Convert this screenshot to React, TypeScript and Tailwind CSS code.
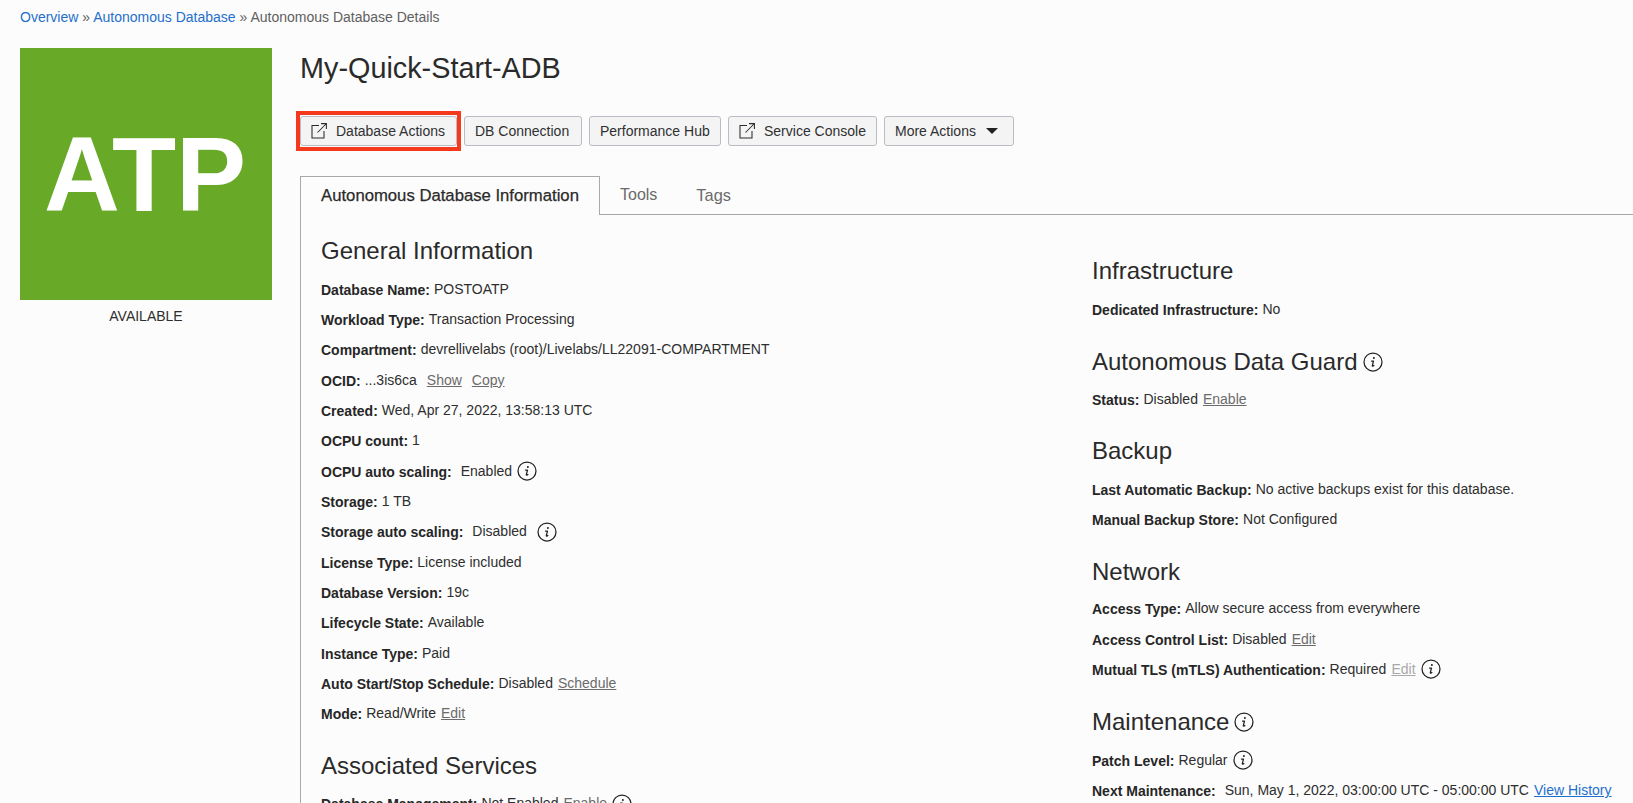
import React from 'react';

function InfoIcon({ className = '' }: { className?: string }) {
  return (
    <svg viewBox="0 0 20 20" className={`inline-block w-[20px] h-[20px] text-[#222] ${className}`} fill="none" stroke="currentColor">
      <circle cx="10" cy="10" r="9" strokeWidth="1.25" />
      <circle cx="10.9" cy="6" r="1" fill="currentColor" stroke="none" />
      <path d="M8.5 9h2l-1.2 4.6c-.1.5.2.7.6.5l1-.6" strokeWidth="1.25" strokeLinecap="round" strokeLinejoin="round" />
    </svg>
  );
}

function ExternalIcon() {
  return (
    <svg viewBox="0 0 16 16" className="w-[16px] h-[16px] shrink-0 text-[#2a2a2a]" fill="none" stroke="currentColor" strokeWidth="1.05">
      <path d="M8 2.5H1v12.5h12V8" />
      <path d="M6.5 9.5 15 1M10 .6h5.4V6" />
    </svg>
  );
}

function ActionButton({ label, external, caret, highlight, className = '' }: { label: string; external?: boolean; caret?: boolean; highlight?: boolean; className?: string }) {
  return (
    <button
      type="button"
      className={`relative h-[30px] flex items-center bg-[#f4f4f5] border border-[#b9bcc2] rounded-[3px] text-[14px] text-[#303030] whitespace-nowrap ${className}`}
    >
      {external && <span className="mr-[9px]"><ExternalIcon /></span>}
      {label}
      {caret && <span className="ml-[10px] w-0 h-0 border-x-[6px] border-x-transparent border-t-[6px] border-t-[#222]" />}
      {highlight && <span className="absolute -inset-x-[5px] -inset-y-[6px] border-[4px] border-[#f5391c]" />}
    </button>
  );
}

function Heading({ children, top = true, className = 'mb-[7.5px]' }: { children: React.ReactNode; top?: boolean; className?: string }) {
  return (
    <h2 className={`h-[30px] flex items-center gap-[5px] text-[24px] leading-[30px] text-[#2a2a2a] ${top ? 'mt-[22px]' : ''} ${className}`}>
      {children}
    </h2>
  );
}

function Row({ label, children }: { label: string; children?: React.ReactNode }) {
  return (
    <div className="h-[30.35px] flex items-center text-[14px] text-[#2e2e2e] whitespace-nowrap">
      <span className="font-bold text-[#262626] mr-[4px] translate-y-px">{label}</span>
      {children}
    </div>
  );
}

function TextLink({ children, muted }: { children: React.ReactNode; muted?: boolean }) {
  return <a className={`underline ${muted ? 'text-[#a9a9a9]' : 'text-[#6b6b6b]'}`}>{children}</a>;
}

export default function App() {
  return (
    <div className="h-screen overflow-hidden bg-[#fcfcfc] font-['Liberation_Sans',Arial,sans-serif]">
      <div className="h-[48px] pl-[20px] pt-[9px] text-[14px] leading-[16px] text-[#5f5f5f]">
        <a className="text-[#1f6fcc]">Overview</a> » <a className="text-[#1f6fcc]">Autonomous Database</a> » Autonomous Database Details
      </div>

      <div className="flex">
        {/* Status tile */}
        <div className="w-[252px] ml-[20px] shrink-0">
          <div className="h-[252px] pr-[2px] bg-[#68a927] flex items-center justify-center text-white font-bold text-[105px] leading-none">ATP</div>
          <div className="mt-[8px] text-center text-[14px] leading-[16px] text-[#2e2e2e]">AVAILABLE</div>
        </div>

        <div className="ml-[28px] flex-1 min-w-0">
          <h1 className="h-[40px] text-[28.8px] leading-[40px] text-[#2a2a2a]">My-Quick-Start-ADB</h1>

          <div className="mt-[28px] flex gap-[7px]">
            <ActionButton label="Database Actions" external highlight className="w-[157px] pl-[10px]" />
            <ActionButton label="DB Connection" className="w-[118px] pl-[10px]" />
            <ActionButton label="Performance Hub" className="w-[132px] pl-[10px]" />
            <ActionButton label="Service Console" external className="w-[149px] pl-[10px]" />
            <ActionButton label="More Actions" caret className="w-[130px] pl-[10px]" />
          </div>

          {/* Tabs */}
          <div className="mt-[30px] flex h-[39px] border-b border-[#a8a8a8]">
            <div className="w-[300px] h-[39px] border border-b-0 border-[#a8a8a8] bg-[#fcfcfc] flex items-center justify-center text-[16.7px] [-webkit-text-stroke:0.25px] text-[#2a2a2a]">
              Autonomous Database Information
            </div>
            <div className="ml-[20px] flex items-center text-[16px] text-[#6a6a6a]">Tools</div>
            <div className="ml-[39px] flex items-center text-[16.4px] text-[#6a6a6a]">Tags</div>
          </div>

          {/* Panel */}
          <div className="border-l border-[#a8a8a8] pl-[20px] pt-[21px] flex">
            <div className="w-[771px] shrink-0">
              <Heading top={false} className="mb-[8px]">General Information</Heading>
              <Row label="Database Name:">POSTOATP</Row>
              <Row label="Workload Type:">Transaction Processing</Row>
              <Row label="Compartment:">devrellivelabs (root)/Livelabs/LL22091-COMPARTMENT</Row>
              <Row label="OCID:">...3is6ca<span className="ml-[10px]"><TextLink>Show</TextLink></span><span className="ml-[10px]"><TextLink>Copy</TextLink></span></Row>
              <Row label="Created:">Wed, Apr 27, 2022, 13:58:13 UTC</Row>
              <Row label="OCPU count:">1</Row>
              <Row label="OCPU auto scaling:"><span className="ml-[5px]">Enabled</span><InfoIcon className="ml-[5px]" /></Row>
              <Row label="Storage:">1 TB</Row>
              <Row label="Storage auto scaling:"><span className="ml-[5px]">Disabled</span><InfoIcon className="ml-[10px]" /></Row>
              <Row label="License Type:">License included</Row>
              <Row label="Database Version:">19c</Row>
              <Row label="Lifecycle State:">Available</Row>
              <Row label="Instance Type:">Paid</Row>
              <Row label="Auto Start/Stop Schedule:">Disabled<span className="ml-[5px]"><TextLink>Schedule</TextLink></span></Row>
              <Row label="Mode:">Read/Write<span className="ml-[5px]"><TextLink>Edit</TextLink></span></Row>
              <Heading>Associated Services</Heading>
              <Row label="Database Management:">Not Enabled<span className="ml-[5px]"><TextLink>Enable</TextLink></span><InfoIcon className="ml-[5px]" /></Row>
            </div>

            <div className="pt-[20px] flex-1 min-w-0">
              <Heading top={false} className="mb-[8.5px]">Infrastructure</Heading>
              <div className="h-[30px] flex items-center text-[14px] text-[#2e2e2e]"><span className="font-bold text-[#262626] mr-[4px] translate-y-px">Dedicated Infrastructure:</span>No</div>
              <Heading>Autonomous Data Guard <InfoIcon /></Heading>
              <Row label="Status:">Disabled<span className="ml-[5px]"><TextLink>Enable</TextLink></span></Row>
              <Heading>Backup</Heading>
              <Row label="Last Automatic Backup:">No active backups exist for this database.</Row>
              <Row label="Manual Backup Store:">Not Configured</Row>
              <Heading className="mb-[7px]">Network</Heading>
              <Row label="Access Type:">Allow secure access from everywhere</Row>
              <Row label="Access Control List:">Disabled<span className="ml-[5px]"><TextLink>Edit</TextLink></span></Row>
              <Row label="Mutual TLS (mTLS) Authentication:">Required<span className="ml-[5px]"><TextLink muted>Edit</TextLink></span><InfoIcon className="ml-[5px]" /></Row>
              <Heading className="mb-[8.5px]">Maintenance <InfoIcon /></Heading>
              <Row label="Patch Level:">Regular<InfoIcon className="ml-[5px]" /></Row>
              <Row label="Next Maintenance:"><span className="ml-[5px]">Sun, May 1, 2022, 03:00:00 UTC - 05:00:00 UTC</span><span className="ml-[5px]"><a className="underline text-[#1f6fcc]">View History</a></span></Row>
            </div>
          </div>
        </div>
      </div>
    </div>
  );
}
